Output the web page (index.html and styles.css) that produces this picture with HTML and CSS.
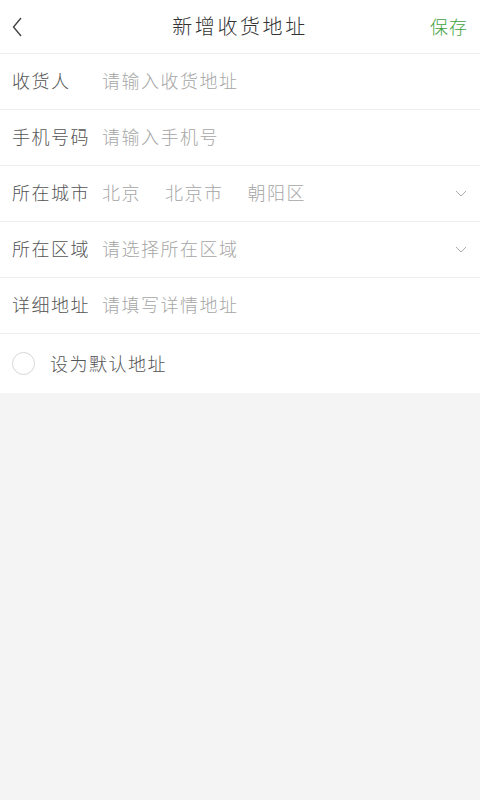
FILE: index.html
```html
<!DOCTYPE html>
<html lang="zh-CN">
<head>
  <meta charset="UTF-8" />
  <title>新增收货地址</title>
  <meta name="viewport" content="width=device-width, initial-scale=1.0" />
  <link rel="stylesheet" href="styles.css">
</head>
<body>
  <div class="header">
    <span class="back">
      <svg width="10" height="20" viewBox="0 0 10 20"><path d="M9 1 L1.5 10 L9 19" fill="none" stroke="#444" stroke-width="1.4"/></svg>
    </span>
    <h1>新增收货地址</h1>
    <span class="save">保存</span>
  </div>

  <div class="form">
    <div class="row">
      <span class="label">收货人</span>
      <span class="value">请输入收货地址</span>
    </div>
    <div class="row">
      <span class="label">手机号码</span>
      <span class="value">请输入手机号</span>
    </div>
    <div class="row">
      <span class="label">所在城市</span>
      <span class="value city">
        <span>北京</span><span>北京市</span><span>朝阳区</span>
      </span>
      <svg class="arrow" width="12" height="7" viewBox="0 0 12 7"><path d="M1 1 L6 6 L11 1" fill="none" stroke="#aaa" stroke-width="1"/></svg>
    </div>
    <div class="row">
      <span class="label">所在区域</span>
      <span class="value">请选择所在区域</span>
      <svg class="arrow" width="12" height="7" viewBox="0 0 12 7"><path d="M1 1 L6 6 L11 1" fill="none" stroke="#aaa" stroke-width="1"/></svg>
    </div>
    <div class="row">
      <span class="label">详细地址</span>
      <span class="value">请填写详情地址</span>
    </div>
    <div class="check-row">
      <span class="circle"></span>
      <span class="check-text">设为默认地址</span>
    </div>
  </div>
</body>
</html>
```

FILE: styles.css
```css
body {
  margin: 0;
  background: #f4f4f4;
  font-family: "Noto Sans CJK SC", "Noto Sans", sans-serif;
  font-weight: 300;
  min-height: 100vh;
}

.header {
  height: 53px;
  background: #fff;
  border-bottom: 1px solid #ececec;
  display: flex;
  align-items: center;
  justify-content: space-between;
  padding: 0 12px;
}

.back {
  display: flex;
  width: 40px;
}

.header h1 {
  margin: 0 0 2px;
  font-size: 20px;
  font-weight: 300;
  letter-spacing: 2.6px;
  color: #333;
}

.save {
  width: 40px;
  text-align: right;
  font-size: 18px;
  letter-spacing: 1px;
  color: #3fa23f;
  margin-bottom: 2px;
}

.form {
  background: #fff;
}

.row {
  height: 56px;
  box-sizing: border-box;
  padding: 0 12px 3px;
  border-bottom: 1px solid #ececec;
  display: flex;
  align-items: center;
  font-size: 18px;
  letter-spacing: 1.5px;
}

.label {
  width: 90px;
  color: #555;
}

.value {
  flex: 1;
  color: #a6a6a6;
}

.city span {
  margin-right: 24px;
}

.arrow {
  margin: 3px 1px 0 0;
}

.check-row {
  height: 59px;
  display: flex;
  align-items: center;
  padding: 0 12px;
}

.circle {
  width: 21px;
  height: 21px;
  border: 1px solid #d6d6d6;
  border-radius: 50%;
  margin-right: 15px;
}

.check-text {
  font-size: 18px;
  letter-spacing: 1.5px;
  color: #555;
  margin-bottom: 2px;
}
```
